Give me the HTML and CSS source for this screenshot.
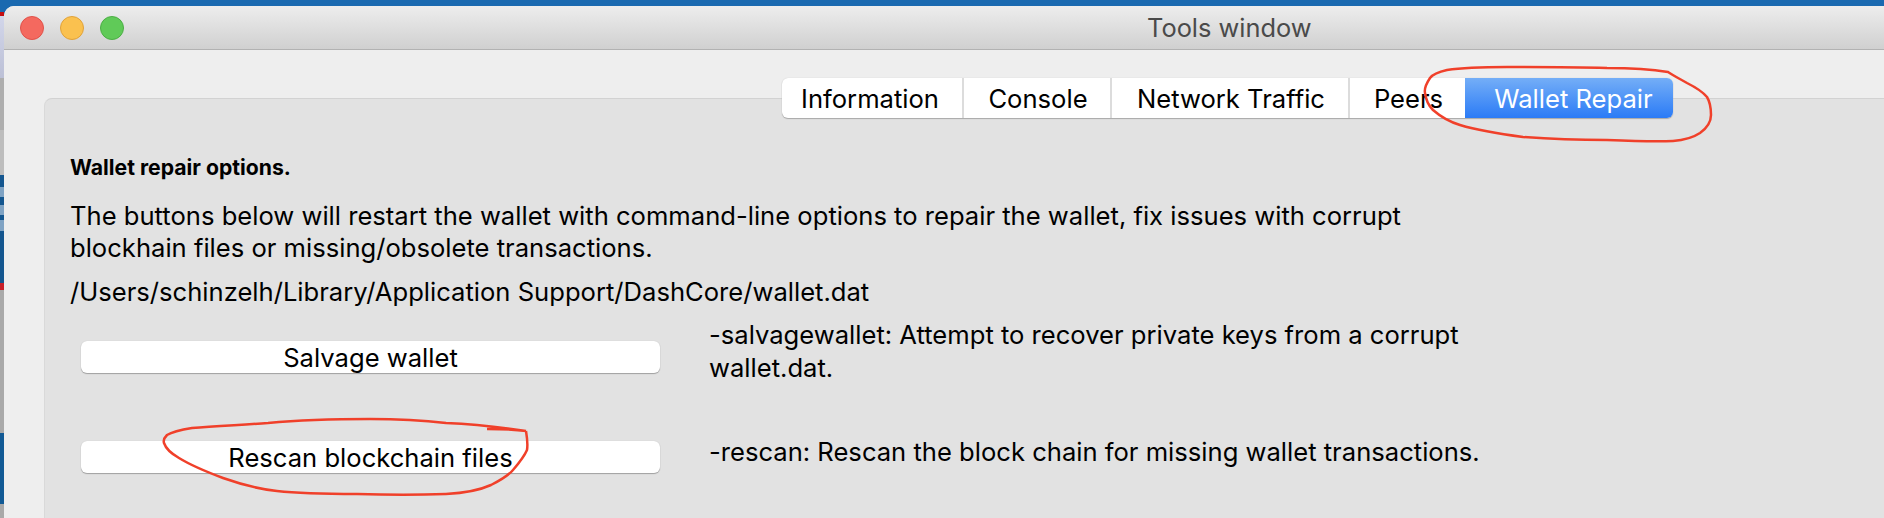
FILE: index.html
```html
<!DOCTYPE html>
<html lang="en">
<head>
  <meta charset="UTF-8" />
  <title>Tools window</title>
  <link rel="stylesheet" href="styles.css">
</head>
<body>
  <div class="desktop">
    <div class="strip">
      <div class="seg seg-blue-top"></div>
      <div class="seg seg-red-top"></div>
      <div class="seg seg-lilac"></div>
      <div class="seg seg-grey-a"></div>
      <div class="seg seg-grey-b"></div>
      <div class="seg seg-blue-a"></div>
      <div class="seg seg-red"></div>
      <div class="seg seg-grey-c"></div>
      <div class="seg seg-blue-b"></div>
      <div class="seg seg-grey-d"></div>
    </div>

    <div class="window">
      <div class="titlebar">
        <span class="light light-close"></span>
        <span class="light light-min"></span>
        <span class="light light-zoom"></span>
        <span class="title">Tools window</span>
      </div>

      <div class="content">
        <div class="tabs">
          <div class="tab tab-info">Information</div>
          <div class="tab tab-mid">Console</div>
          <div class="tab tab-mid">Network Traffic</div>
          <div class="tab tab-mid">Peers</div>
          <div class="tab tab-active">Wallet Repair</div>
        </div>

        <div class="pane">
          <p class="heading">Wallet repair options.</p>
          <p class="intro">The buttons below will restart the wallet with command-line options to repair the wallet, fix issues with corrupt blockhain files or missing/obsolete transactions.</p>
          <p class="path">/Users/schinzelh/Library/Application Support/DashCore/wallet.dat</p>

          <div class="options">
            <button class="btn">Salvage wallet</button>
            <p class="desc">-salvagewallet: Attempt to recover private keys from a corrupt wallet.dat.</p>
            <button class="btn">Rescan blockchain files</button>
            <p class="desc">-rescan: Rescan the block chain for missing wallet transactions.</p>
          </div>
        </div>
      </div>
    </div>
  </div>

  <!-- red pen marks drawn on top of the screenshot -->
  <svg class="marks" width="1884" height="518" viewBox="0 0 1884 518">
    <path d="M1668 72 C1650 69 1630 68 1607 68 C1570 67 1540 67 1507 67 C1480 67 1460 68 1447 70 C1438 72 1433 74 1430 78 C1426 84 1424 88 1425 93 C1426 101 1429 106 1433 110 C1441 117 1450 122 1460 125 C1480 131 1500 134 1523 137 C1550 139 1580 140 1607 140 C1630 141 1655 142 1673 141 C1686 140 1694 137 1700 133 C1707 128 1711 122 1711 115 C1711 107 1710 102 1707 97 C1702 91 1695 87 1687 83 C1680 79 1674 76 1668 72 Z"/>
    <path d="M526 431 C512 429 500 429 487 429 M526 431 C500 427 472 424 446 423 C420 420 395 419 370 419 C335 419 300 420 268 423 C240 425 215 426 192 428 C180 430 172 432 167 435 C164 438 163 440 164 443 C166 449 172 454 179 458 C192 466 207 472 223 478 C240 484 258 489 277 491 C303 494 330 494 357 494 C387 495 420 495 446 494 C465 493 480 490 491 485 C501 480 508 476 513 470 C519 463 524 457 527 450 C528 444 527 437 526 431"/>
  </svg>
</body>
</html>
```

FILE: styles.css
```css
html, body {
  margin: 0;
  height: 518px;
  overflow: hidden;
}
body {
  position: relative;
  font-family: Inter, "Liberation Sans", sans-serif;
  color: #000;
}
p {
  margin: 0;
}

.desktop {
  display: flex;
  height: 518px;
  background: #1a69b0;
}
.strip {
  width: 4px;
  flex: none;
  display: flex;
  flex-direction: column;
}
.seg-blue-top { height: 12px; background: #1a69b0; }
.seg-red-top { height: 4px; background: #c40f12; }
.seg-lilac { height: 62px; background: linear-gradient(#d2d6ea, #bcc0d6); }
.seg-grey-a { height: 52px; background: #aeaeae; }
.seg-grey-b { height: 45px; background: #bdbdbd; }
.seg-blue-a {
  height: 108px;
  background: linear-gradient(#14568f 0 12px, #7fa3c4 12px 22px, #14568f 22px 30px, #7fa3c4 30px 40px, #14568f 40px 45px, #7fa3c4 45px 56px, #14568f 56px);
}
.seg-red { height: 7px; background: #c8202a; }
.seg-grey-c { height: 143px; background: #a9a9a9; }
.seg-blue-b { height: 71px; background: #125a95; }
.seg-grey-d { height: 14px; background: #a9a9a9; }

.window {
  flex: 1;
  margin-top: 6px;
  background: #eeeeee;
  border-top-left-radius: 10px;
  overflow: hidden;
}
.titlebar {
  height: 43px;
  display: flex;
  align-items: center;
  gap: 16px;
  padding-left: 16px;
  background: linear-gradient(#ededed, #d0d0d0);
  border-bottom: 1px solid #b2b2b2;
}
.light {
  width: 24px;
  height: 24px;
  box-sizing: border-box;
  border-radius: 50%;
  border: 1px solid;
}
.light-close { background: #f4695f; border-color: #e0524a; }
.light-min { background: #fac14f; border-color: #e0a23a; }
.light-zoom { background: #60ca58; border-color: #4cae45; }
.title {
  margin-left: 1007px;
  font-size: 25.4px;
  color: #4a4a4a;
}

.content {
  padding-top: 28px;
}
.tabs {
  position: relative;
  display: grid;
  grid-template-columns: 182px 148px 238px 115px 208px;
  width: 891px;
  height: 40px;
  margin-left: 778px;
  margin-bottom: -20px;
  border-radius: 6px;
  background: #fff;
  box-shadow: 0 1px 1px #a8a8a8, 0 0 1px #c4c4c4;
}
.tab {
  display: flex;
  align-items: center;
  justify-content: center;
  box-sizing: border-box;
  font-size: 25.6px;
  border-right: 2px solid #dcdcdc;
}
.tab-info {
  padding-right: 4px;
}
.tab-mid {
  padding-left: 2px;
}
.tab:nth-child(4) {
  border-right: none;
}
.tab-active {
  padding-left: 9px;
  border-right: none;
  border-radius: 0 6px 6px 0;
  color: #fff;
  background: linear-gradient(#74aef7, #2b7bf6);
}

.pane {
  margin-left: 40px;
  height: 420px;
  box-sizing: border-box;
  padding: 57px 0 0 25px;
  background: #e2e2e2;
  border-top: 1px solid #d2d2d2;
  border-left: 1px solid #d9d9d9;
  border-top-left-radius: 8px;
}
.heading {
  font-size: 21.2px;
  font-weight: 700;
  line-height: 22px;
}
.intro {
  width: 1350px;
  margin-top: 22px;
  font-size: 25.6px;
  line-height: 32px;
}
.path {
  margin-top: 11px;
  font-size: 25.6px;
  line-height: 33px;
}
.options {
  display: grid;
  grid-template-columns: 579px 790px;
  grid-template-rows: 32px 32px;
  row-gap: 68px;
  column-gap: 49px;
  margin-top: 33px;
  margin-left: 11px;
}
.btn {
  height: 32px;
  padding: 0;
  font: 25.6px Inter, "Liberation Sans", sans-serif;
  color: #000;
  background: #fff;
  border: none;
  border-radius: 6px;
  box-shadow: 0 1px 1px #a0a0a0, 0 0 1px #bcbcbc;
}
.desc {
  align-self: center;
  font-size: 25.6px;
  line-height: 33px;
  margin-top: -12px;
}

.marks {
  position: absolute;
  left: 0;
  top: 0;
  fill: none;
  stroke: #f0402a;
  stroke-width: 2.5;
}
```
